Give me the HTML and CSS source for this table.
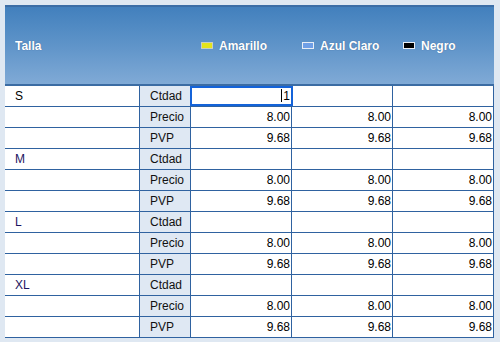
FILE: index.html
```html
<!DOCTYPE html>
<html>
<head>
<meta charset="utf-8">
<link rel="stylesheet" href="styles.css">
</head>
<body>
<div class="panel">
  <div class="head">
    <div class="hcell c1">Talla</div>
    <div class="hcell c2"></div>
    <div class="hcell c3"><span class="sw sw-yellow"></span>Amarillo</div>
    <div class="hcell c4"><span class="sw sw-blue"></span>Azul Claro</div>
    <div class="hcell c5"><span class="sw sw-black"></span>Negro</div>
  </div>
  <div class="grid">
    <div class="cell size first">S</div><div class="cell lbl">Ctdad</div><div class="cell num focus"><span class="caret"></span>1</div><div class="cell num"></div><div class="cell num"></div>
    <div class="cell size"></div><div class="cell lbl">Precio</div><div class="cell num">8.00</div><div class="cell num">8.00</div><div class="cell num">8.00</div>
    <div class="cell size"></div><div class="cell lbl">PVP</div><div class="cell num">9.68</div><div class="cell num">9.68</div><div class="cell num">9.68</div>

    <div class="cell size">M</div><div class="cell lbl">Ctdad</div><div class="cell num"></div><div class="cell num"></div><div class="cell num"></div>
    <div class="cell size"></div><div class="cell lbl">Precio</div><div class="cell num">8.00</div><div class="cell num">8.00</div><div class="cell num">8.00</div>
    <div class="cell size"></div><div class="cell lbl">PVP</div><div class="cell num">9.68</div><div class="cell num">9.68</div><div class="cell num">9.68</div>

    <div class="cell size">L</div><div class="cell lbl">Ctdad</div><div class="cell num"></div><div class="cell num"></div><div class="cell num"></div>
    <div class="cell size"></div><div class="cell lbl">Precio</div><div class="cell num">8.00</div><div class="cell num">8.00</div><div class="cell num">8.00</div>
    <div class="cell size"></div><div class="cell lbl">PVP</div><div class="cell num">9.68</div><div class="cell num">9.68</div><div class="cell num">9.68</div>

    <div class="cell size">XL</div><div class="cell lbl">Ctdad</div><div class="cell num"></div><div class="cell num"></div><div class="cell num"></div>
    <div class="cell size"></div><div class="cell lbl">Precio</div><div class="cell num">8.00</div><div class="cell num">8.00</div><div class="cell num">8.00</div>
    <div class="cell size"></div><div class="cell lbl">PVP</div><div class="cell num">9.68</div><div class="cell num">9.68</div><div class="cell num">9.68</div>
  </div>
</div>
</body>
</html>
```
FILE: styles.css
```css
html, body {
  margin: 0;
  padding: 0;
  background: #dfe8f2;
  font-family: "Liberation Sans", Arial, sans-serif;
  font-size: 12px;
}
.panel {
  margin: 5px 0 0 5px;
  width: 489px;
}
.head {
  box-sizing: border-box;
  height: 81px;
  border-top: 2px solid #3b6da6;
  border-bottom: 2px solid #3b6ca3;
  background: linear-gradient(to bottom, #4280bd 0%, #5f94c9 50%, #80aad6 100%);
  display: grid;
  grid-template-columns: 135px 51px 101px 101px 101px;
  align-items: center;
}
.hcell {
  color: #ffffff;
  font-weight: bold;
  text-shadow: 0 0 1px #3a5f8c;
  display: flex;
  align-items: center;
  white-space: nowrap;
}
.hcell.c1 { padding-left: 10px; }
.hcell.c3, .hcell.c4, .hcell.c5 { padding-left: 10px; }
.sw {
  display: inline-block;
  box-sizing: border-box;
  width: 12px;
  height: 7px;
  margin-right: 6px;
  border: 1px solid #e8eef6;
}
.sw-yellow { background: #e4e41c; border-color: #c9cfc0; }
.sw-blue { background: #6f9fe6; }
.sw-black { background: #000000; }
.grid {
  display: grid;
  grid-template-columns: 135px 51px 101px 101px 101px;
  grid-auto-rows: 21px;
  background: #ffffff;
}
.cell {
  box-sizing: border-box;
  border-bottom: 1px solid #2f62a0;
  border-right: 1px solid #2f62a0;
  line-height: 20px;
  color: #000000;
  white-space: nowrap;
  overflow: visible;
}
.size {
  padding-left: 10px;
  color: #1c1460;
}
.size.first { color: #000000; }
.lbl {
  background: #dfe8f3;
  padding-left: 10px;
  color: #111111;
}
.num {
  text-align: right;
  padding-right: 1px;
}
.focus {
  position: relative;
}
.focus::after {
  content: "";
  position: absolute;
  left: -1px;
  top: 0;
  right: -2px;
  bottom: 0;
  border: 2px solid #1463d9;
}
.caret {
  display: inline-block;
  width: 1px;
  height: 13px;
  background: #000000;
  vertical-align: -2px;
  margin-right: 1px;
}
```
